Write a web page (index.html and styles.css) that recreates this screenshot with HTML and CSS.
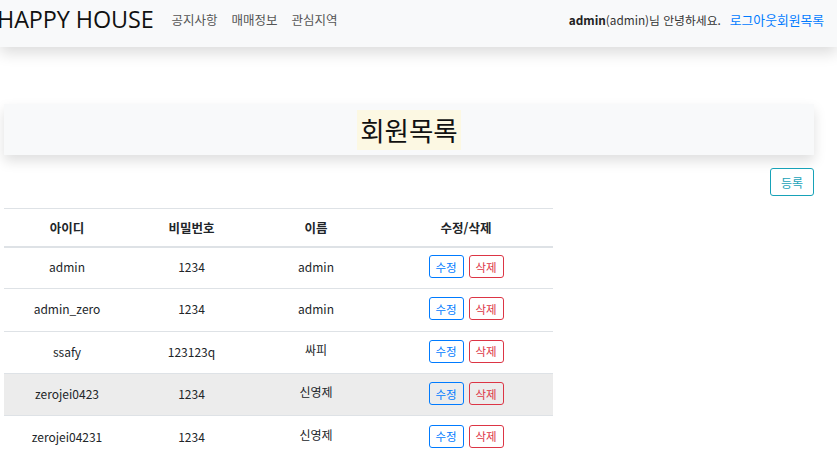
FILE: index.html
```html
<!DOCTYPE html>
<html lang="ko">
<head>
<meta charset="utf-8">
<link rel="stylesheet" href="styles.css">
</head>
<body>
<nav class="navbar">
  <div class="nav-left">
    <span class="brand">HAPPY HOUSE</span>
    <a class="nav-link">공지사항</a>
    <a class="nav-link">매매정보</a>
    <a class="nav-link">관심지역</a>
  </div>
  <div class="nav-right">
    <span class="greet"><b>admin</b>(admin)님 안녕하세요.</span>
    <a class="link">로그아웃</a><a class="link">회원목록</a>
  </div>
</nav>
<main class="content">
  <div class="title-box"><h2 class="title">회원목록</h2></div>
  <div class="actions"><button class="btn btn-info">등록</button></div>
  <table class="table">
    <thead>
      <tr><th class="c1">아이디</th><th class="c2">비밀번호</th><th class="c3">이름</th><th class="c4">수정/삭제</th></tr>
    </thead>
    <tbody>
      <tr><td>admin</td><td>1234</td><td>admin</td><td><button class="btn btn-sm btn-primary">수정</button><button class="btn btn-sm btn-danger">삭제</button></td></tr>
      <tr><td>admin_zero</td><td>1234</td><td>admin</td><td><button class="btn btn-sm btn-primary">수정</button><button class="btn btn-sm btn-danger">삭제</button></td></tr>
      <tr><td>ssafy</td><td>123123q</td><td class="up">싸피</td><td><button class="btn btn-sm btn-primary">수정</button><button class="btn btn-sm btn-danger">삭제</button></td></tr>
      <tr class="hover"><td>zerojei0423</td><td>1234</td><td class="up">신영제</td><td><button class="btn btn-sm btn-primary">수정</button><button class="btn btn-sm btn-danger">삭제</button></td></tr>
      <tr><td>zerojei04231</td><td>1234</td><td class="up">신영제</td><td><button class="btn btn-sm btn-primary">수정</button><button class="btn btn-sm btn-danger">삭제</button></td></tr>
    </tbody>
  </table>
</main>
</body>
</html>
```
FILE: styles.css
```css
* { box-sizing: border-box; }
html, body { margin: 0; padding: 0; background: #fff; }
body {
  font-family: "Noto Sans CJK KR", "Noto Sans", sans-serif;
  color: #212529;
  font-size: 12px;
  overflow: hidden;
}
.navbar {
  height: 47px;
  background: #f8f9fa;
  box-shadow: 0 6px 14px rgba(0,0,0,0.14);
  display: flex;
  align-items: center;
  justify-content: space-between;
  padding: 0 13px 8px 0;
  position: relative;
  z-index: 2;
}
.nav-left { display: flex; align-items: center; margin-left: -3px; }
.brand {
  font-family: "Open Sans", "Noto Sans", sans-serif;
  font-size: 23.4px;
  color: #111;
  margin-right: 11px;
  line-height: 1;
  letter-spacing: -0.1px;
}
.nav-link {
  font-size: 12.5px;
  color: #555;
  padding: 0 7px;
}
.nav-right { color: #333; display: flex; align-items: center; }
.greet { font-size: 11.8px; margin-right: 9px; }
.greet b { font-weight: 700; color: #222; }
.link { color: #007bff; font-size: 12.8px; }
.content { padding: 57px 23px 0 4px; }
.title-box {
  background: #f8f9fa;
  height: 51px;
  box-shadow: 0 6px 12px rgba(0,0,0,0.13);
  display: flex;
  align-items: center;
  justify-content: center;
}
.title {
  margin: 0;
  font-weight: 400;
  font-size: 26.5px;
  line-height: 40px;
  background: #fcf8e3;
  padding: 0 3px;
  color: #111;
}
.actions { display: flex; justify-content: flex-end; margin-top: 13px; padding-right: 0; }
.btn {
  font-family: inherit;
  background: #fff;
  border: 1px solid;
  border-radius: 3px;
  cursor: pointer;
}
.btn-info {
  border-color: #17a2b8;
  color: #17a2b8;
  font-size: 12px;
  height: 28px;
  width: 44px;
  padding: 0;
}
.table {
  width: 549px;
  border-collapse: collapse;
  margin-top: 12px;
  text-align: center;
  font-size: 12px;
}
.table th {
  font-weight: 700;
  font-size: 12.5px;
  border-top: 1px solid #dee2e6;
  border-bottom: 2px solid #dee2e6;
  height: 38px;
  padding: 0;
}
.table td {
  border-bottom: 1px solid #dee2e6;
  height: 42.3px;
  padding: 0 0 2px;
}
.table tr:last-child td { border-bottom: none; }
.c1 { width: 126px; }
.c2 { width: 123px; }
.c3 { width: 126px; }
.table td.up { padding-bottom: 6px; }
.hover td { background: #ececec; }
.btn-sm {
  font-size: 11.5px;
  height: 23px;
  width: 35px;
  padding: 0;
  margin: 0 2.5px;
  background: transparent;
}
.btn-primary { border-color: #007bff; color: #007bff; }
.btn-danger { border-color: #dc3545; color: #dc3545; }
```
